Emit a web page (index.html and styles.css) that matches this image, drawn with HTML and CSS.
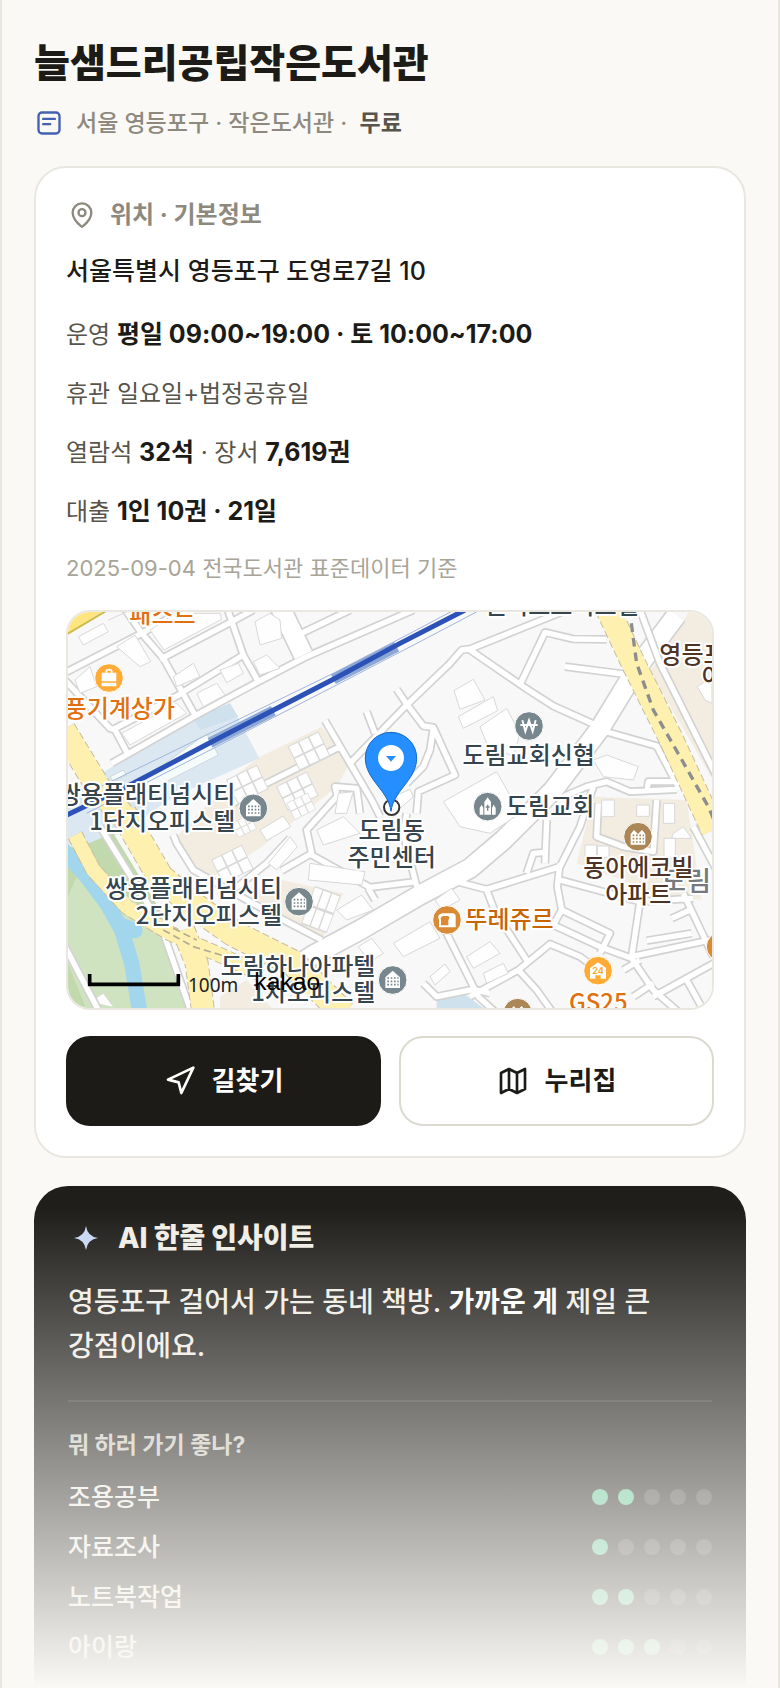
FILE: index.html
```html
<!DOCTYPE html>
<html lang="ko">
<head>
  <meta charset="UTF-8" />
  <meta name="viewport" content="width=device-width, initial-scale=1.0"/>
  <title>늘샘드리공립작은도서관</title>
  <link rel="stylesheet" href="styles.css">
</head>
<body>
<main class="page">
  <header class="top">
    <h1>늘샘드리공립작은도서관</h1>
    <p class="meta">
      <svg class="icon blue" viewBox="0 0 24 24"><rect x="3" y="3" width="18" height="18" rx="3"/><path d="M7 8.500h10M7 13h6"/></svg>
      <span>서울 영등포구 · 작은도서관 ·&nbsp; <b>무료</b></span>
    </p>
  </header>

  <section class="card">
    <h2 class="card-title">
      <svg class="icon" viewBox="0 0 24 24"><path d="M20 10c0 5-5.500 10.200-7.400 11.800a1 1 0 0 1-1.200 0C9.500 20.200 4 15 4 10a8 8 0 0 1 16 0z"/><circle cx="12" cy="10" r="3"/></svg>
      위치 · 기본정보
    </h2>
    <p class="address">서울특별시 영등포구 도영로7길 10</p>
    <ul class="facts">
      <li>운영 <b>평일 09:00~19:00 · 토 10:00~17:00</b></li>
      <li>휴관 일요일+법정공휴일</li>
      <li>열람석 <b>32석</b> · 장서 <b>7,619권</b></li>
      <li>대출 <b>1인 10권 · 21일</b></li>
    </ul>
    <p class="source">2025-09-04 전국도서관 표준데이터 기준</p>

    <div class="map">
      <svg viewBox="24 36 1932 1188" preserveAspectRatio="xMidYMid slice" role="img" aria-label="지도">
        <defs>
          <g id="roads">
            <path d="M0 226L245 100L370 30M190 20L245 100L310 175L405 345M300 178L510 68L580 30M500 20L550 165L595 245M365 278L550 165M155 490L410 345L595 245L735 172L1060 30M720 102L870 30M10 235L150 385L165 390L205 465M160 388L370 278"/>
            <path d="M870 490L1040 315L1170 190L1205 150L1230 147L1520 30M1230 150L1390 260L1480 318L1600 372M1378 258L1455 97L1540 117L1640 118M1515 200L1690 222M1010 268L1040 312L1090 378L1120 382L1185 525L1075 575L1070 640M1120 385L1110 450L1090 500L1040 550M1620 390L1790 438L1860 570M1510 590L1580 560L1640 545L1710 575L1850 568M1760 580L1765 545L1840 545"/>
            <path d="M795 362L870 490L935 600L960 650M920 335L945 400M840 440L600 560L520 610M835 600L825 560L890 565L900 640M830 590L740 690L755 760L665 812M340 705L350 730L400 810L560 900L680 965L785 1020M755 765L930 862L1070 845M925 865L945 900M1040 640L1030 700L1070 860M690 715L620 790L520 870"/>
            <path d="M1190 845L1280 868L1500 800L1560 680L1600 560M1280 870L1305 935L1400 1080M1500 790L1492 860L1505 930L1480 975L1620 1040L1715 1075L1780 1170L1860 1240M1500 840L1740 905L1900 895M1740 905L1715 1070L1950 1020M1230 1190L1375 1110L1470 1032L1560 1070L1640 1130M1155 990L1255 1190L1310 1240M1090 1150L1130 1190L1240 1168L1290 1180M1375 1110L1430 1170L1480 1240M1780 1190L1970 1085M1870 880L1960 1070M1760 1022L1895 1000M1460 660L1455 790M1400 820L1420 760L1455 757M1505 930L1650 1000L1620 1060M1835 955L1890 930M1615 610L1610 710L1690 740L1780 755L1790 600M1690 1110L1740 1080M1880 1140L1930 1230M1720 1190L1780 1150"/>
          </g>
          <g id="wide">
            <path d="M1850 45L1730 205L1617 390L1480 570L1330 720L1230 805L1080 885L900 990L760 1065L660 1130"/>
            <path d="M660 20L730 165"/>
          </g>
          <g id="grid">
            <path d="M0 0h32v38h-32zM34 0h32v38h-32zM68 0h32v38h-32zM0 40h32v38h-32zM34 40h32v38h-32zM68 40h32v38h-32z"/>
          </g>
          <g id="flats">
            <path class="glyph" d="M-22-8L0-28L22-8V24H-22Z"/>
            <path class="dots" d="M-16-6H18M-16 4H18M-16 14H18"/>
          </g>
        </defs>

        <rect class="land" x="0" y="0" width="2000" height="1260"/>

        <path class="beige" d="M1890 30H2000V610L1770 215Z"/>
        <path class="beige" d="M600 470L785 380L870 490L830 560L600 745L450 835L405 810L350 710L520 530Z"/>
        <path class="beige" d="M1600 590L1880 600L1925 900L1820 890L1550 790Z"/>
        <path class="beige" d="M560 900L640 835L850 880L790 1010Z"/>
        <path class="beige" d="M480 1190L560 1140L640 1230H480Z"/>
        <path class="station" d="M510 310L598 475L340 590L200 690L24 770V600L140 510L400 360Z"/>
        <path class="station-dark" d="M400 355L510 310L535 350L420 390ZM1130 1190L1210 1180L1270 1224H1130Z"/>

        <path class="green" d="M60 740L160 700L300 930L400 1240H0V740Z"/>
        <path class="green-light" d="M50 830L100 880L170 860L290 960L340 1080L380 1230H80L20 1080V900Z"/>
        <path class="river" d="M0 740L80 830L140 910L185 990L215 1090L240 1240"/>
        <path class="river" d="M180 975L225 992"/>

        <use href="#roads" class="casing"/>
        <use href="#wide" class="casing-wide"/>
        <use href="#roads" class="fill"/>
        <use href="#wide" class="fill-wide"/>

        <g class="building">
          <path d="M55 110L130 70L145 95L70 135ZM145 60L200 36M270 90L345 40H480L485 58L312 150ZM170 140L225 105L272 185L240 200ZM585 65L630 40L660 60L665 115L600 135ZM580 185L620 165L660 205L600 225ZM340 230L400 190L420 230L350 260ZM480 210L535 190L550 220L500 248ZM410 280L470 250L495 285L430 320ZM45 240L90 200L110 260L60 280ZM185 400L350 310L380 340L210 435Z"/>
          <path d="M1182 272L1240 238L1275 300L1200 328ZM1195 350L1300 290L1313 332L1210 385ZM1260 380L1340 325L1380 400L1360 470L1280 430ZM1150 605L1310 515L1380 640L1290 700L1200 680ZM1600 480L1640 465L1735 500L1720 540L1630 530Z"/>
          <path d="M600 690L670 648L692 680L620 722ZM625 790L690 710L712 740L650 810ZM750 790L915 815L905 855L745 840ZM830 930L905 885L940 930L860 960ZM770 690L850 650L900 700L790 735ZM835 580L880 575L860 640L825 640ZM895 1040L935 1015L970 1060L930 1085ZM1000 1030L1110 965L1140 1015L1030 1070ZM1125 900L1175 865L1200 900L1145 930Z"/>
          <path d="M1110 1130L1155 1092L1170 1115L1125 1155ZM1220 1070L1290 1025L1320 1060L1240 1105ZM1270 1120L1330 1090L1345 1120L1280 1150ZM1575 735h35v36h-35zM1612 738h35v34h-35zM1625 600h38v50h-38zM1730 615h38v34h-38zM1810 610h34v60h-34zM1840 700L1870 680L1895 715H1835ZM1812 715h34v60h-34zM1010 585L1050 568L1060 590L1015 630ZM90 1205L130 1180L160 1220M690 1190L740 1150L800 1220"/>
          <path d="M1912 260L1956 230V310L1935 300Z"/>
        </g>
        <g class="building">
          <use href="#grid" transform="translate(685 440) rotate(-26)"/>
          <use href="#grid" transform="translate(500 540) rotate(-26)"/>
          <use href="#grid" transform="translate(650 560) rotate(-26)"/>
          <use href="#grid" transform="translate(455 780) rotate(-26)"/>
          <use href="#grid" transform="translate(515 670) rotate(-26) scale(.6)"/>
          <use href="#grid" transform="translate(765 860) rotate(20) scale(.8 1.500)"/>
          <use href="#grid" transform="translate(680 610) rotate(-26) scale(.7)"/>
        </g>

        <path class="tracks" d="M90 650L220 560L440 400L475 465L250 580ZM150 530L190 510L200 525L160 545Z"/>
        <path class="casing" d="M120 680L300 970L395 1240M10 1030L120 1240"/>
        <path class="fill" d="M120 680L300 970L395 1240M10 1030L120 1240"/>

        <g class="yellow-edge">
          <path d="M10 390L120 570L200 660" stroke-width="78"/>
          <path d="M190 640L300 830L400 915L520 1000L700 1090L850 1240" stroke-width="82"/>
          <path d="M45 705L100 810L200 920L330 1000L480 1065L600 1120" stroke-width="48"/>
          <path d="M370 990L410 1090L430 1240" stroke-width="72"/>
          <path d="M1640 20L1720 190L1830 410L1960 690" stroke-width="76"/>
        </g>
        <g class="yellow">
          <path d="M10 390L120 570L200 660" stroke-width="72"/>
          <path d="M190 640L300 830L400 915L520 1000L700 1090L850 1240" stroke-width="76"/>
          <path d="M45 705L100 810L200 920L330 1000L480 1065L600 1120" stroke-width="42"/>
          <path d="M370 990L410 1090L430 1240" stroke-width="66"/>
          <path d="M1640 20L1720 190L1830 410L1960 690" stroke-width="70"/>
        </g>
        <path class="casing" d="M1740 30L1800 190L1970 530M1900 680L1970 810"/>
        <path class="fill" d="M1740 30L1800 190L1970 530M1900 680L1970 810"/>
        <path class="median" d="M1714 70L1730 190L1780 330L1860 470L1945 620L1975 690"/>
        <path class="median-thin" d="M310 990L400 1040L500 1070M340 985L410 1020"/>
        <path class="corner" d="M0 20H150L0 115Z"/>
        <path class="corner-line" d="M0 115L160 20"/>

        <path class="rail-thin" d="M60 590L450 400L820 220L1060 95L1190 26M80 640L470 440L830 255L1080 125L1270 25"/>
        <path class="rail-band" d="M450 428L640 332M820 238L1010 140"/>
        <path class="rail" d="M0 655L220 550L450 428L820 238L1020 130L1215 30"/>

        <g class="label orange">
          <text x="208" y="68">패스트</text>
          <text x="345" y="350" text-anchor="end">풍기계상가</text>
          <text x="1615" y="1233" text-anchor="middle">GS25</text>
        </g>
        <text class="label brown-orange" x="1216" y="984">뚜레쥬르</text>
        <g class="label gray"><text x="1804" y="873">도림</text></g>
        <g class="label slate">
          <text x="1272" y="42">엘리트오피스텔</text>
          <text x="526" y="609" text-anchor="end">쌍용플래티넘시티</text>
          <text x="526" y="690" text-anchor="end">1단지오피스텔</text>
          <text x="666" y="892" text-anchor="end">쌍용플래티넘시티</text>
          <text x="666" y="972" text-anchor="end">2단지오피스텔</text>
          <text x="946" y="1124" text-anchor="end">도림하나아파텔</text>
          <text x="946" y="1204" text-anchor="end">1차오피스텔</text>
          <text x="995" y="716" text-anchor="middle">도림동</text>
          <text x="995" y="797" text-anchor="middle">주민센터</text>
          <text x="1406" y="493" text-anchor="middle">도림교회신협</text>
          <text x="1338" y="645">도림교회</text>
        </g>
        <g class="label brown">
          <text x="1798" y="188">영등포</text>
          <text x="1925" y="255">아</text>
          <text x="1735" y="829" text-anchor="middle">동아에코빌</text>
          <text x="1735" y="909" text-anchor="middle">아파트</text>
        </g>

        <g class="poi">
          <g transform="translate(147 234)"><circle r="43" fill="#ffab35"/><path class="glyph" d="M-22-16H22V10H-22ZM-22 14H22V25H-22Z"/><path class="handle" d="M-8-16V-20Q-8-25 0-25T8-20V-16"/></g>
          <g transform="translate(580 625)" color="#78878d"><circle r="43" fill="#78878d"/><use href="#flats"/></g>
          <g transform="translate(717 905)" color="#78878d"><circle r="43" fill="#78878d"/><use href="#flats"/></g>
          <g transform="translate(998 1140)" color="#78878d"><circle r="43" fill="#78878d"/><use href="#flats"/></g>
          <g transform="translate(1407 378)"><circle r="43" fill="#78878d"/><path class="won" d="M-20-17L-11 16L0-17L11 16L20-17M-26-3H26"/></g>
          <g transform="translate(1283 620)"><circle r="43" fill="#78878d"/><path class="glyph" d="M-10 24V-14L0-28L10-14V24ZM-24 24V4L-18-6L-13 4V24ZM13 24V4L18-6L24 4V24Z"/><path d="M0-6V12M-6 1H6" stroke="#78878d" stroke-width="4"/></g>
          <g transform="translate(1734 710)" color="#ab8757"><circle r="43" fill="#ab8757"/><path class="glyph" d="M-22-8L-12-20L0-8L12-20L22-8V24H-22Z"/><path class="dots" d="M-16-4H18M-16 6H18M-16 16H18"/></g>
          <g transform="translate(1161 960)"><circle r="43" fill="#d88b34"/><path class="glyph" d="M-14-20H18Q28-18 26-6V22H-24V0Q-32-16-14-20Z"/><path d="M-12-12Q-22-8-18 0V16H4V0Q12-10 2-12Z" fill="#d88b34"/></g>
          <g transform="translate(1614 1112)"><circle r="43" fill="#ffab35"/><path class="glyph" d="M-24-8L0-25L24-8V24H8V14H-8V24H-24Z"/><text class="num" y="9" text-anchor="middle">24</text></g>
          <g transform="translate(1373 1238)"><circle r="43" fill="#ab8757"/><path class="glyph" d="M-22-8L-12-20L0-8L12-20L22-8V24H-22Z"/></g>
          <g transform="translate(1982 1040)"><circle r="43" fill="#d88b34"/></g>
        </g>

        <circle class="target" cx="995" cy="622" r="23"/>
        <path class="pin" d="M993 634C985 570 916 540 916 474A77 77 0 0 1 1070 474C1070 540 1001 570 993 634Z"/>
        <circle cx="993" cy="474" r="39" fill="#fff"/>
        <path d="M978 468H1008L993 485Z" fill="#258fff"/>

        <path class="scale" d="M89 1122V1153H355V1122"/>
        <text class="scale-text" x="384" y="1175">100m</text>
        <text class="brand" x="583" y="1170">kakao</text>
      </svg>
    </div>

    <div class="actions">
      <button type="button" class="btn dark">
        <svg class="icon" viewBox="0 0 24 24"><path d="M3 11L22 2L13 21L11 13Z"/></svg>
        길찾기
      </button>
      <button type="button" class="btn">
        <svg class="icon" viewBox="0 0 24 24"><path d="M3 6L9 3L15 6L21 3V18L15 21L9 18L3 21ZM9 3V18M15 6V21"/></svg>
        누리집
      </button>
    </div>
  </section>

  <section class="insight">
    <h2>
      <svg class="spark" viewBox="0 0 24 24"><path d="M12 0Q13.500 10.500 24 12Q13.500 13.500 12 24Q10.500 13.500 0 12Q10.500 10.500 12 0Z"/></svg>
      AI 한줄 인사이트
    </h2>
    <p class="summary">영등포구 걸어서 가는 동네 책방. <b>가까운 게</b> 제일 큰 강점이에요.</p>
    <h3>뭐 하러 가기 좋나?</h3>
    <ul class="scores">
      <li>조용공부 <span class="score"><i class="on"></i><i class="on"></i><i></i><i></i><i></i></span></li>
      <li>자료조사 <span class="score"><i class="on"></i><i></i><i></i><i></i><i></i></span></li>
      <li>노트북작업 <span class="score"><i class="on"></i><i class="on"></i><i></i><i></i><i></i></span></li>
      <li>아이랑 <span class="score"><i class="on"></i><i class="on"></i><i class="on"></i><i></i><i></i></span></li>
    </ul>
  </section>
</main>
</body>
</html>
```

FILE: styles.css
```css
* {
  box-sizing: border-box;
}
body {
  margin: 0;
  background: #faf9f5;
  color: #1c1b17;
  font-family: Inter, 'Noto Sans CJK KR', sans-serif;
  word-break: keep-all;
}
h1, h2, h3, p, ul {
  margin: 0;
  padding: 0;
}
ul {
  list-style: none;
}
.page {
  position: relative;
  height: 100vh;
  overflow: hidden;
  padding: 34px 32px 0;
  border-left: 2px solid #e9e7e0;
  border-right: 2px solid #e9e7e0;
}
/* fade towards the bottom of the screen */
.page::after {
  content: "";
  position: absolute;
  left: 0;
  right: 0;
  bottom: 0;
  height: 480px;
  background: linear-gradient(rgba(250, 249, 245, 0), #faf9f5);
}
.icon {
  width: 28px;
  height: 28px;
  flex: none;
  fill: none;
  stroke: currentColor;
  stroke-width: 2;
  stroke-linecap: round;
  stroke-linejoin: round;
}
.blue {
  color: #4361b0;
}

.top h1 {
  font-size: 39px;
  line-height: 58px;
  font-weight: 800;
}
.meta {
  display: flex;
  align-items: center;
  gap: 13px;
  margin-top: 14px;
  padding-left: 1px;
  line-height: 34px;
  font-size: 23px;
  font-weight: 500;
  color: #8d897e;
}
.meta b {
  color: #57544b;
  font-weight: 700;
}

.card {
  margin-top: 26px;
  padding: 30px;
  background: #fff;
  border: 2px solid #e9e7e0;
  border-radius: 32px;
}
.card-title {
  display: flex;
  align-items: center;
  gap: 14px;
  padding-left: 2px;
  font-size: 24px;
  line-height: 34px;
  font-weight: 700;
  color: #8d897e;
}
.address {
  margin-top: 21px;
  font-size: 25px;
  line-height: 36px;
  font-weight: 500;
}
.facts {
  margin-top: 16px;
  font-size: 24px;
  line-height: 59px;
  color: #57544b;
}
.facts li {
  height: 59px;
}
.facts b {
  color: #1c1b17;
  font-size: 25px;
  font-weight: 700;
}
.source {
  margin-top: 2px;
  font-size: 22px;
  line-height: 50px;
  color: #a8a498;
}
.map {
  height: 400px;
  margin-top: 17px;
  border: 2px solid #e9e7e0;
  border-radius: 24px;
  overflow: hidden;
}
.map svg {
  display: block;
  width: 100%;
  height: 100%;
}
.actions {
  display: grid;
  grid-template-columns: 1fr 1fr;
  gap: 18px;
  margin-top: 26px;
}
.btn {
  display: flex;
  align-items: center;
  justify-content: center;
  gap: 16px;
  height: 90px;
  background: #fff;
  color: #1c1b17;
  border: 2px solid #dcd9d0;
  border-radius: 24px;
  font: inherit;
  font-size: 26px;
  line-height: 32px;
  font-weight: 700;
}
.btn.dark {
  background: #1c1b17;
  border-color: #1c1b17;
  color: #fff;
}
.btn .icon {
  width: 32px;
  height: 32px;
}

/* map drawing */
.land { fill: #f8f8f8; }
.beige { fill: #f3ece1; }
.station { fill: #dbe8f1; }
.station-dark { fill: #cfe1ed; }
.green { fill: #c2d9ae; }
.green-light { fill: #d0e3c0; }
.river, .casing, .fill, .casing-wide, .fill-wide, .yellow, .yellow-edge,
.median, .median-thin, .rail, .rail-band, .rail-thin, .corner-line {
  fill: none;
}
.river { stroke: #a2d6ec; stroke-width: 46; stroke-linecap: round; stroke-linejoin: round; }
.casing { stroke: #d2d2d2; stroke-width: 26; stroke-linejoin: round; }
.fill { stroke: #fff; stroke-width: 16; stroke-linejoin: round; }
.casing-wide { stroke: #d2d2d2; stroke-width: 66; }
.fill-wide { stroke: #fff; stroke-width: 56; }
.building { fill: #fefefe; stroke: #d8d8d8; stroke-width: 3; }
.tracks { fill: #f5fafb; stroke: #cfd6da; stroke-width: 3; }
.yellow { stroke: #fef0ae; stroke-linejoin: round; }
.yellow-edge { stroke: #c9bda0; stroke-dasharray: 22 10; }
.median { stroke: #8d8d90; stroke-width: 10; stroke-dasharray: 26 18; }
.median-thin { stroke: #b3ab95; stroke-width: 5; stroke-dasharray: 22 12; }
.corner { fill: #fee57f; }
.corner-line { stroke: #cdbb4c; stroke-width: 6; }
.rail { stroke: #2c52b7; stroke-width: 15; }
.rail-band { stroke: #8ea8d5; stroke-width: 32; }
.rail-thin { stroke: #9fb5dc; stroke-width: 3; }
.label {
  font-family: 'Noto Sans CJK KR', sans-serif;
  font-size: 72px;
  font-weight: 500;
  stroke: #fff;
  stroke-width: 12;
  stroke-linejoin: round;
  paint-order: stroke;
}
.orange { fill: #e07010; }
.brown-orange { fill: #c96500; }
.slate { fill: #35444d; }
.brown { fill: #4e3426; }
.gray { fill: #77797c; font-size: 81px; }
.poi > g > circle { stroke: #fff; stroke-width: 3; }
.glyph { fill: #fff; }
.handle { fill: none; stroke: #fff; stroke-width: 5; }
.dots { fill: none; stroke: currentColor; stroke-width: 5; stroke-dasharray: 5 5; }
.won { fill: none; stroke: #fff; stroke-width: 6; }
.num { fill: #ffab35; font-size: 27px; font-weight: 700; }
.target { fill: #fff; stroke: #333; stroke-width: 6; }
.pin { fill: #258fff; stroke: #1668c9; stroke-width: 3; }
.scale { fill: none; stroke: #000; stroke-width: 11; }
.scale-text { font-family: 'Noto Sans', sans-serif; font-size: 57px; fill: #222; }
.brand { font-family: 'Liberation Sans', sans-serif; font-size: 74px; fill: #000; }

.insight {
  margin-top: 28px;
  padding: 32px 34px 60px;
  background: #1f1e1a;
  border-radius: 34px;
  color: #f0ede5;
}
.insight h2 {
  display: flex;
  align-items: center;
  gap: 20px;
  padding-left: 6px;
  font-size: 28px;
  line-height: 40px;
  font-weight: 800;
}
.spark {
  width: 24px;
  height: 24px;
  fill: #c9d7f5;
}
.summary {
  margin-top: 22px;
  padding-bottom: 32px;
  border-bottom: 2px solid rgba(255, 255, 255, .1);
  font-size: 28px;
  line-height: 44px;
  font-weight: 500;
}
.summary b {
  color: #fff;
}
.insight h3 {
  margin-top: 26px;
  font-size: 23px;
  line-height: 34px;
  font-weight: 700;
  color: #c9c6bc;
}
.scores {
  margin-top: 10px;
  font-size: 25px;
  line-height: 50px;
  font-weight: 500;
}
.scores li {
  display: flex;
  align-items: center;
  justify-content: space-between;
  height: 50px;
}
.score {
  display: flex;
  gap: 10px;
}
.score i {
  width: 16px;
  height: 16px;
  border-radius: 50%;
  background: rgba(255, 255, 255, .16);
}
.score .on {
  background: #5fc596;
}
```
